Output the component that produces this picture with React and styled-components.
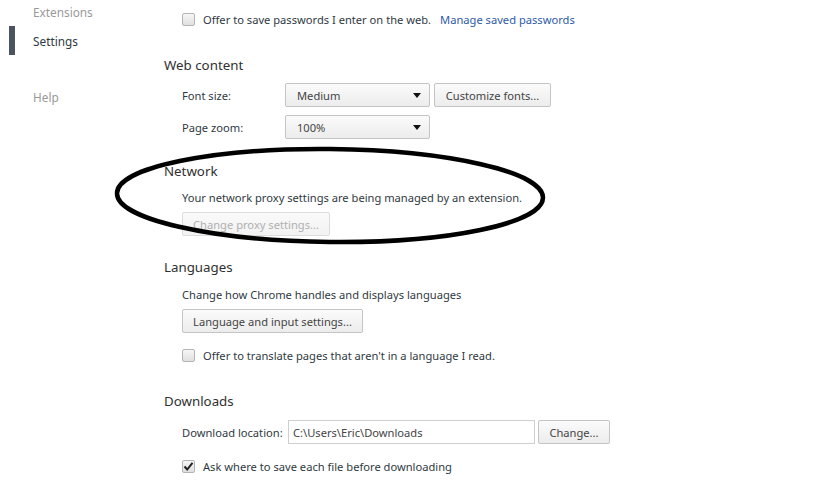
import React from "react";
import styled, { createGlobalStyle, css } from "styled-components";

const Global = createGlobalStyle`
  html, body { margin: 0; padding: 0; background: #fff; }
  body { font-family: "Noto Sans", "Open Sans", sans-serif; font-size: 11.15px; color: #303942; }
  * { box-sizing: border-box; }
`;

const Page = styled.div`
  position: relative;
  display: flex;
  width: 832px;
  height: 497px;
  overflow: hidden;
  background: #fff;
`;

const Sidebar = styled.nav`
  width: 164px;
  flex: none;
  display: flex;
  flex-direction: column;
  padding-left: 9px;
  margin-top: -3px;
`;

const NavItem = styled.div`
  height: 29px;
  display: flex;
  align-items: center;
  padding-left: 18px;
  border-left: 6px solid ${(p) => (p.$active ? "#4b545e" : "transparent")};
  font-size: 11.8px;
  color: ${(p) => (p.$active ? "#303942" : "#999")};
  margin-top: ${(p) => p.$gap || 0}px;
`;

const Main = styled.main`
  flex: 1;
  display: flex;
  flex-direction: column;
  padding-top: 7px;
`;

const Section = styled.section`
  display: flex;
  flex-direction: column;
  margin-top: ${(p) => p.$gap || 0}px;
`;

const Heading = styled.h3`
  margin: 0;
  height: 20px;
  line-height: 20px;
  font-size: 13.3px;
  font-weight: normal;
  color: #303030;
`;

const Body = styled.div`
  display: flex;
  flex-direction: column;
  padding-left: 18px;
`;

const Row = styled.div`
  display: flex;
  align-items: center;
  height: ${(p) => (p.$text ? 20 : 24)}px;
  margin-top: ${(p) => p.$gap || 0}px;
  white-space: nowrap;
`;

const Label = styled.span`
  width: ${(p) => (p.$w ? `${p.$w}px` : "auto")};
  flex: none;
`;

const Link = styled.a`
  color: #2d5aa8;
  margin-left: 9px;
  text-decoration: none;
`;

const controlBg = css`
  background: linear-gradient(#fbfbfb, #ececec);
  border: 1px solid #c4c4c4;
  border-radius: 2px;
`;

const Select = styled.div`
  ${controlBg};
  width: ${(p) => p.$w}px;
  height: 24px;
  display: flex;
  align-items: center;
  justify-content: space-between;
  padding: 0 8px 0 11px;
  color: #444;
`;

const Arrow = styled.span`
  width: 0;
  height: 0;
  border-left: 4px solid transparent;
  border-right: 4px solid transparent;
  border-top: 5px solid #111;
`;

const Button = styled.button`
  ${controlBg};
  font: inherit;
  height: 24px;
  width: ${(p) => p.$w}px;
  margin-left: ${(p) => p.$ml || 0}px;
  padding: 0;
  color: #444;
  ${(p) =>
    p.disabled &&
    css`
      background: linear-gradient(#fafafa, #f2f2f2);
      border-color: #dcdcdc;
      color: #b0b0b0;
    `}
`;

const Input = styled.div`
  width: 247px;
  height: 24px;
  border: 1px solid #cfcfcf;
  display: flex;
  align-items: center;
  padding-left: 4px;
  color: #444;
`;

const Box = styled.span`
  width: 13px;
  height: 13px;
  flex: none;
  border: 1px solid #b4b4b4;
  border-radius: 2px;
  background: linear-gradient(#f6f6f6, #e0e0e0);
  margin-right: 8px;
  display: flex;
  align-items: center;
  justify-content: center;
`;

const Overlay = styled.svg`
  position: absolute;
  left: 0;
  top: 0;
  pointer-events: none;
`;

const Checkbox = ({ checked, children }) => (
  <>
    <Box>
      {checked && (
        <svg width="11" height="11" viewBox="0 0 11 11">
          <path d="M1.5 5.5 L4.2 8.5 L9.5 1.8" fill="none" stroke="#222" strokeWidth="2" />
        </svg>
      )}
    </Box>
    <span>{children}</span>
  </>
);

export default function App() {
  return (
    <Page>
      <Global />
      <Sidebar>
        <NavItem>Extensions</NavItem>
        <NavItem $active>Settings</NavItem>
        <NavItem $gap={27}>Help</NavItem>
      </Sidebar>
      <Main>
        <Body>
          <Row>
            <Checkbox>Offer to save passwords I enter on the web.</Checkbox>
            <Link>Manage saved passwords</Link>
          </Row>
        </Body>

        <Section $gap={24}>
          <Heading>Web content</Heading>
          <Body>
            <Row $gap={8}>
              <Label $w={103}>Font size:</Label>
              <Select $w={145}>
                Medium <Arrow />
              </Select>
              <Button $w={117} $ml={4}>Customize fonts...</Button>
            </Row>
            <Row $gap={8}>
              <Label $w={103}>Page zoom:</Label>
              <Select $w={145}>
                100% <Arrow />
              </Select>
            </Row>
          </Body>
        </Section>

        <Section $gap={22}>
          <Heading>Network</Heading>
          <Body>
            <Row $text $gap={6}>Your network proxy settings are being managed by an extension.</Row>
            <Row $gap={5}>
              <Button $w={148} disabled>Change proxy settings...</Button>
            </Row>
          </Body>
        </Section>

        <Section $gap={21}>
          <Heading>Languages</Heading>
          <Body>
            <Row $text $gap={7}>Change how Chrome handles and displays languages</Row>
            <Row $gap={5}>
              <Button $w={181}>Language and input settings...</Button>
            </Row>
            <Row $gap={10}>
              <Checkbox>Offer to translate pages that aren't in a language I read.</Checkbox>
            </Row>
          </Body>
        </Section>

        <Section $gap={24}>
          <Heading>Downloads</Heading>
          <Body>
            <Row $gap={9}>
              <Label $w={106}>Download location:</Label>
              <Input>C:\Users\Eric\Downloads</Input>
              <Button $w={72} $ml={3}>Change...</Button>
            </Row>
            <Row $gap={10}>
              <Checkbox checked>Ask where to save each file before downloading</Checkbox>
            </Row>
          </Body>
        </Section>
      </Main>
      <Overlay width="832" height="497" viewBox="0 0 832 497">
        <ellipse cx="330" cy="195.5" rx="213" ry="46.5" fill="none" stroke="#000" strokeWidth="4.5" transform="rotate(0.6 330 195)" />
      </Overlay>
    </Page>
  );
}
